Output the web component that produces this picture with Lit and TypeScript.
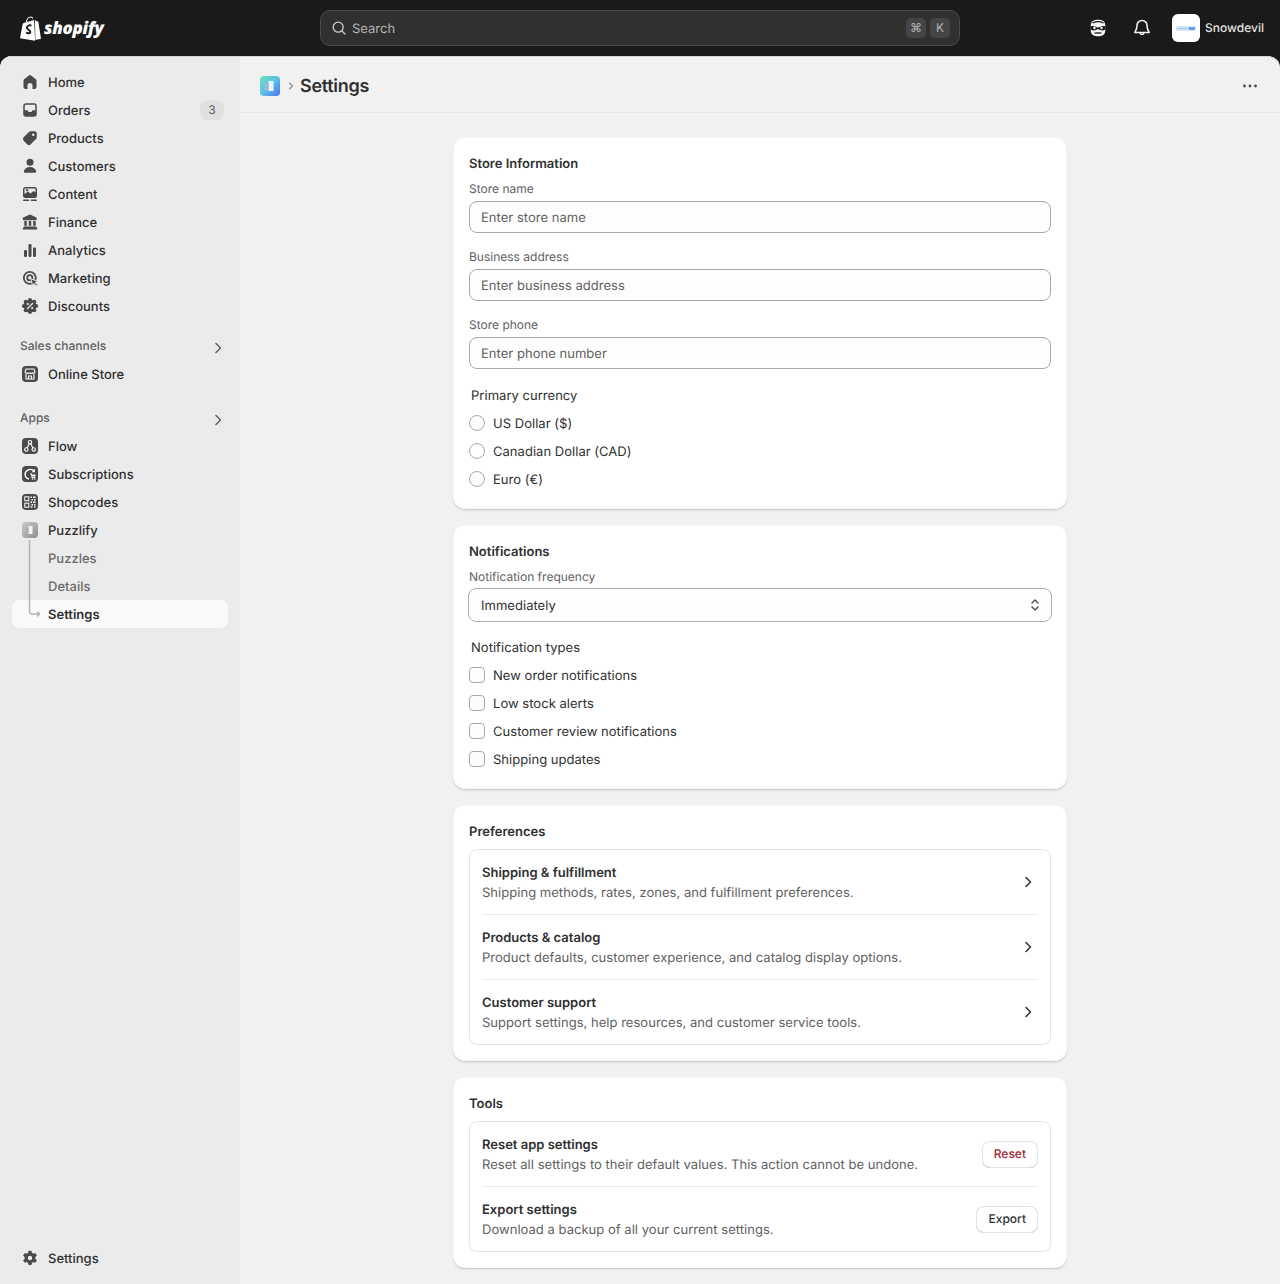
import { LitElement, html, css, svg } from "lit";
import { customElement } from "lit/decorators.js";

const ic = (d: unknown) => html`<svg class="ic" viewBox="0 0 20 20" fill="#4a4a4a" fill-rule="evenodd">${d}</svg>`;
const scallops = [0, 45, 90, 135, 180, 225, 270, 315].map(a => {
  const r = (a * Math.PI) / 180;
  return svg`<circle cx=${10 + 6.1 * Math.cos(r)} cy=${10 + 6.1 * Math.sin(r)} r="2"/>`;
});
const paths: Record<string, unknown> = {
  home: svg`<path d="M8.900 3.400a1.750 1.750 0 0 1 2.200 0l4.750 3.800c.42.33.65.83.65 1.360V15a2 2 0 0 1-2 2H12.500v-3.500a2.500 2.500 0 0 0-5 0V17H5.500a2 2 0 0 1-2-2V8.560c0-.53.23-1.030.65-1.360z"/>`,
  orders: svg`<path d="M6 3.250h8A2.750 2.750 0 0 1 16.750 6v8A2.750 2.750 0 0 1 14 16.750H6A2.750 2.750 0 0 1 3.250 14V6A2.750 2.750 0 0 1 6 3.250zM4.750 6c0-.7.55-1.250 1.250-1.250h8c.7 0 1.250.55 1.250 1.250v4.250H13a1 1 0 0 0-.9.6l-.35.7a1 1 0 0 1-.9.55H9.150a1 1 0 0 1-.9-.55l-.35-.7a1 1 0 0 0-.9-.6H4.750z"/>`,
  products: svg`<path d="M10.700 3.250h4a2 2 0 0 1 2.050 2v4a2.500 2.500 0 0 1-.73 1.770l-5.300 5.300a2.500 2.500 0 0 1-3.530 0l-3.500-3.500a2.500 2.500 0 0 1 0-3.540l5.250-5.300a2.500 2.500 0 0 1 1.760-.73zM13.250 8a1.250 1.250 0 1 0 0-2.500 1.250 1.250 0 0 0 0 2.500z"/>`,
  customers: svg`<circle cx="10" cy="6.250" r="3.500"/><path d="M10 11c3.200 0 5.500 1.700 6.200 4.200.2.8-.5 1.550-1.300 1.550H5.100c-.8 0-1.500-.75-1.300-1.550C4.500 12.700 6.800 11 10 11z"/>`,
  content: svg`<path d="M5.500 3h9A2.500 2.500 0 0 1 17 5.500v6a2.500 2.500 0 0 1-2.500 2.500h-9A2.500 2.500 0 0 1 3 11.500v-6A2.500 2.500 0 0 1 5.500 3zM4.500 5.500c0-.55.45-1 1-1h9c.55 0 1 .45 1 1v2.800l-2-1.300-3 2.500-2.500-2-3.500 2.500zM7.200 7.300a1.200 1.200 0 1 0 0-2.400 1.200 1.200 0 0 0 0 2.400z"/><rect x="3" y="15.500" width="6.300" height="1.500" rx=".75"/><rect x="10.700" y="15.500" width="6.300" height="1.500" rx=".75"/>`,
  finance: svg`<path d="M9.300 2.700a1.500 1.500 0 0 1 1.400 0l5.500 2.800c.4.2.55.5.55.9V7.200c0 .55-.45 1-1 1H3.750c-.55 0-1-.45-1-1v-.8c0-.4.15-.7.55-.9z"/><rect x="4.300" y="9" width="2.500" height="4.800"/><rect x="8.750" y="9" width="2.500" height="4.800"/><rect x="13.200" y="9" width="2.500" height="4.800"/><rect x="3.500" y="14.400" width="13" height="1.500" rx=".5"/><rect x="2.750" y="15.800" width="14.500" height="1.700" rx=".5"/>`,
  analytics: svg`<rect x="4" y="10" width="3" height="7" rx="1.200"/><rect x="8.500" y="4" width="3" height="13" rx="1.200"/><rect x="13" y="7.500" width="3" height="9.500" rx="1.200"/>`,
  marketing: svg`<g fill="none" stroke="#4a4a4a" stroke-width="1.800"><circle cx="9.800" cy="9.800" r="6"/><circle cx="9.800" cy="9.800" r="2.600"/></g><path d="M11 11l7 2.300-2.800 1.200 2.300 2.300-1.100 1.100-2.300-2.300-1.200 2.800z" stroke="#ebebeb" stroke-width=".9" stroke-linejoin="round"/>`,
  discounts: svg`${scallops}<circle cx="10" cy="10" r="6.300"/><g stroke="#ebebeb" fill="none" stroke-linecap="round"><path d="M12.500 7.500l-5 5" stroke-width="1.300"/></g><circle cx="7.800" cy="8" r="1.100" fill="#ebebeb"/><circle cx="12.200" cy="12" r="1.100" fill="#ebebeb"/>`,
  settings: svg`<path stroke="#4a4a4a" stroke-width=".9" stroke-linejoin="round" d="M8.800 3.200h2.400l.5 2 1.500.9 2-.6 1.200 2.100-1.500 1.400v1.800l1.500 1.400-1.200 2.100-2-.6-1.500.9-.5 2H8.800l-.5-2-1.500-.9-2 .6-1.200-2.100 1.500-1.400V9L3.600 7.600l1.200-2.100 2 .6 1.500-.9z"/><circle cx="10" cy="10" r="2.200" fill="#ebebeb"/>`,
};

const appIcon = (inner: unknown) => html`<svg class="ic app" viewBox="0 0 16 16"><rect width="16" height="16" rx="4" fill="#4a4a4a"/>${inner}</svg>`;
const online = appIcon(svg`<g fill="none" stroke="#fff" stroke-width="1.100"><path d="M4 3h8l1 2.800a1.500 1.500 0 0 1-2.500 1 1.700 1.700 0 0 1-2.500 0 1.700 1.700 0 0 1-2.500 0 1.500 1.500 0 0 1-2.500-1z"/><path d="M4 7.500V13h8V7.500"/><path d="M6.500 13v-3h3v3"/></g>`);
const flow = appIcon(svg`<g fill="none" stroke="#fff" stroke-width="1.100"><circle cx="8" cy="4.200" r="1.700"/><circle cx="4.300" cy="11.500" r="1.700"/><circle cx="11.700" cy="11.500" r="1.700"/><path d="M7.300 5.800 5 10M8.700 5.800 11 10"/></g>`);
const subs = appIcon(svg`<path d="M12.500 5.200A5.500 5.500 0 0 0 3 8a5.200 5.200 0 0 0 4 5" fill="none" stroke="#fff" stroke-width="1.400"/><path d="M13 2.800v3.400H9.600z" fill="#fff"/><path d="M8 8h1.500l.6 3.500h3.200" fill="none" stroke="#fff" stroke-width="1.100"/><rect x="10" y="8.500" width="3.500" height="2" fill="#fff"/><circle cx="10.500" cy="13" r=".8" fill="#fff"/><circle cx="12.800" cy="13" r=".8" fill="#fff"/>`);
const qr = appIcon(svg`<g fill="none" stroke="#fff" stroke-width="1"><rect x="2.800" y="2.800" width="4" height="4"/><rect x="2.800" y="9.200" width="4" height="4"/></g><g fill="#fff"><rect x="8.500" y="2.500" width="1.500" height="1.500"/><rect x="11" y="2.500" width="2.500" height="1.500"/><rect x="9.500" y="5" width="1.500" height="1.500"/><rect x="12" y="5" width="1.500" height="1.500"/><rect x="8.500" y="7.500" width="1.500" height="1.500"/><rect x="11" y="7.500" width="2.500" height="1.500"/><rect x="9.500" y="10" width="1.500" height="1.500"/><rect x="12" y="10" width="1.500" height="1.500"/><rect x="8.500" y="12.200" width="2" height="1.300"/><rect x="12" y="12.200" width="1.500" height="1.300"/></g>`);
const puzzleGray = html`<svg class="ic app" viewBox="0 0 16 16"><defs><linearGradient id="pg" x1="0" y1="0" x2="1" y2="1"><stop offset="0" stop-color="#c9c9c9"/><stop offset="1" stop-color="#8f8f8f"/></linearGradient></defs><rect width="16" height="16" rx="4" fill="url(#pg)"/><rect x="6.500" y="4" width="4" height="8" fill="#f1f1f1"/><rect x="4" y="6" width="2.500" height="2" fill="#aaa"/><rect x="4" y="9" width="2.500" height="2" fill="#aaa"/></svg>`;

const chevron = html`<svg class="chev" viewBox="0 0 20 20" fill="none" stroke="#303030" stroke-width="1.500" stroke-linecap="round" stroke-linejoin="round"><path d="M8 5.500 12.500 10 8 14.500"/></svg>`;
const secChev = html`<svg class="secchev" viewBox="0 0 20 20" fill="none" stroke="#616161" stroke-width="1.500" stroke-linecap="round" stroke-linejoin="round"><path d="M8 5.500 12.500 10 8 14.500"/></svg>`;

const nav = [
  ["Home", "home"], ["Orders", "orders"], ["Products", "products"], ["Customers", "customers"], ["Content", "content"],
  ["Finance", "finance"], ["Analytics", "analytics"], ["Marketing", "marketing"], ["Discounts", "discounts"],
];

@customElement("app-root")
export class AppRoot extends LitElement {
  static styles = css`
    :host { display: block; height: 100vh; overflow: hidden; background: #1a1a1a; font-family: Inter, "Liberation Sans", sans-serif; font-size: 13px; line-height: 20px; color: #303030; text-rendering: geometricPrecision; }
    * { box-sizing: border-box; }
    .tx { padding-top: 1px; }
    .top { height: 56px; display: grid; grid-template-columns: 320px 640px 1fr; align-items: center; }
    .logo { display: flex; align-items: center; padding-left: 20px; gap: 3px; }
    .logo svg { width: 21px; height: 25px; display: block; }
    .word { font-family: "Open Sans", sans-serif; font-style: italic; font-weight: 800; font-size: 17px; color: #fff; letter-spacing: -.3px; line-height: 24px; }
    .search { height: 36px; border-radius: 10px; background: #303030; border: 1px solid #4a4a4a; display: flex; align-items: center; padding: 0 9px 0 10px; color: #b5b5b5; }
    .search svg { width: 16px; height: 16px; margin-right: 5px; flex: none; }
    .search span.t { flex: 1; font-size: 13px; padding-top: 1px; }
    .kbd { width: 20px; height: 20px; border-radius: 5px; background: #454545; display: flex; align-items: center; justify-content: center; font-size: 12px; color: #b5b5b5; margin-left: 4px; }
    .right { display: flex; align-items: center; justify-content: flex-end; padding-right: 16px; }
    .right .mask { width: 20px; height: 20px; margin-right: 24px; }
    .right .bell { width: 20px; height: 20px; margin-right: 20px; }
    .avatar { width: 28px; height: 28px; border-radius: 6px; background: #fff; display: flex; align-items: center; justify-content: center; margin-right: 5px; }
    .avatar svg { width: 20px; height: 5px; }
    .shop { font-size: 12px; font-weight: 500; color: #e3e3e3; }

    .body { height: calc(100vh - 56px); display: grid; grid-template-columns: 240px 1fr; border-radius: 12px 12px 0 0; overflow: hidden; background: #f1f1f1; box-shadow: inset 0 1px 0 #d4d4d4; }
    .side { background: #ebebeb; padding: 12px; display: flex; flex-direction: column; justify-content: space-between; box-shadow: inset 0 1px 0 #d4d4d4; }
    .item { height: 28px; display: flex; align-items: center; gap: 8px; padding: 0 4px 0 8px; border-radius: 8px; font-weight: 500; color: #303030; }
    .ic { width: 20px; height: 20px; flex: none; display: block; }
    .ic.app { width: 16px; height: 16px; margin: 0 2px; }
    .item .label { flex: 1; padding-top: 1px; }
    .count { min-width: 24px; height: 20px; border-radius: 8px; background: #e0e0e0; color: #616161; font-size: 12px; display: flex; align-items: center; justify-content: center; font-weight: 400; }
    .section { height: 28px; display: flex; align-items: center; justify-content: space-between; padding: 0 0 0 8px; font-size: 12px; font-weight: 550; color: #616161; margin-top: 12px; }
    .section.apps { margin-top: 16px; }
    .secchev { width: 20px; height: 20px; margin-top: 3px; flex: none; }
    .subs { position: relative; }
    .tree { position: absolute; left: 16px; top: -4px; width: 14px; height: 80px; }
    .sub { height: 28px; display: flex; align-items: center; padding: 1px 0 0 36px; border-radius: 8px; color: #6b6b6b; font-weight: 500; }
    .sub.active { background: #fafafa; color: #303030; font-weight: 600; }

    .main { min-width: 0; display: flex; flex-direction: column; }
    .head { height: 57px; flex: none; border-bottom: 1px solid #e8e8e8; display: flex; align-items: center; padding: 4px 20px 0; }
    .appmark { width: 20px; height: 20px; display: block; }
    .crumb { width: 12px; height: 12px; margin: 0 3px 0 5px; }
    .title { font-size: 18px; font-weight: 600; line-height: 24px; color: #303030; flex: 1; letter-spacing: -.3px; padding-top: 1px; }
    .dots { width: 20px; height: 20px; }
    .content { display: flex; flex-direction: column; gap: 16px; width: 614px; margin: 24px 0 0 213px; }
    .card { background: #fff; border-radius: 12px; padding: 16px; box-shadow: 0 1px 0 #d0d0d0, 0 2px 3px -1px rgba(26,26,26,.12), inset 0 0 0 1px rgba(0,0,0,.03); }
    .card h2 { margin: 0 0 7px; padding-top: 1px; font-size: 13px; line-height: 20px; font-weight: 600; color: #303030; }
    .lab { display: block; font-size: 12px; line-height: 16px; margin-bottom: 4px; color: #616161; }
    .inp { height: 32px; border: 1px solid #a8a8a8; border-radius: 8px; background: #fdfdfd; display: flex; align-items: center; padding: 0 11px; color: #616161; margin-bottom: 16px; letter-spacing: .03px; }
    .inp.last { margin-bottom: 12px; }
    .inp.sel { height: 34px; margin: -1px -1px 11px; padding: 0 6px 0 12px; color: #303030; border-color: #b0b0b0; justify-content: space-between; }
    .inp.sel svg { width: 20px; height: 20px; }
    .grp { height: 28px; display: flex; align-items: center; padding: 1px 0 0 2px; color: #303030; letter-spacing: .03px; }
    .opt { height: 28px; display: flex; align-items: center; gap: 8px; color: #303030; letter-spacing: .03px; }
    .radio { width: 16px; height: 16px; border-radius: 50%; border: 1px solid #a8a8a8; background: #fdfdfd; flex: none; }
    .check { width: 16px; height: 16px; border-radius: 4px; border: 1px solid #a8a8a8; background: #fdfdfd; flex: none; }
    .box { border: 1px solid #e3e3e3; border-radius: 8px; padding: 0 12px; }
    .row { display: flex; align-items: center; justify-content: space-between; padding: 12px 0; border-bottom: 1px solid #ebebeb; }
    .row:last-child { border-bottom: 0; }
    .row b { display: block; font-weight: 600; color: #303030; padding-top: 1px; margin-bottom: -1px; }
    .row span { display: block; color: #616161; letter-spacing: .03px; padding-top: 1px; margin-bottom: -1px; }
    .chev { width: 20px; height: 20px; flex: none; }
    .btn { height: 27px; padding: 0 12px; display: flex; align-items: center; border-radius: 8px; background: #fff; font-size: 12px; font-weight: 550; color: #303030; box-shadow: inset 0 0 0 1px #e3e3e3, inset 0 -1px 0 #b5b5b5; }
    .btn.danger { color: #9c1f36; }
  `;

  render() {
    return html`
      <div class="top">
        <div class="logo">
          <svg viewBox="0 0 21 25">
            <path d="M6.300 6.500C6.600 3.500 8.500 1 10.700 1c1 0 1.700.6 2.100 1.500" fill="none" stroke="#fff" stroke-width="1.100"/>
            <path d="M0 22.200 2.800 7.400 5.300 6.600l6-1.800 2.800-.7 1 20.600z" fill="#fff"/>
            <path d="M14.900 3.800l1.600 1.500 1.800.2L21 22.700l-5.600 1.300z" fill="#fff"/>
            <path d="M11.500 9.700c-2-.9-4.600-.1-4.600 1.900 0 2.200 3.500 2.500 3.500 4.300 0 1.700-2.500 1.700-4.200.5" fill="none" stroke="#1a1a1a" stroke-width="1.900"/>
          </svg>
          <span class="word">shopify</span>
        </div>
        <div class="search">
          <svg viewBox="0 0 16 16" fill="none" stroke="#d0d0d0" stroke-width="1.300" stroke-linecap="round"><circle cx="7.200" cy="7.200" r="5"/><path d="M11 11l3 3"/></svg>
          <span class="t">Search</span>
          <span class="kbd">⌘</span><span class="kbd">K</span>
        </div>
        <div class="right">
          <svg class="mask" viewBox="0 0 18 18"><path d="M9 1.500c3.800 0 6.500 1.500 6.500 5v5c0 3.500-2.700 5-6.500 5s-6.500-1.500-6.500-5v-5c0-3.500 2.700-5 6.500-5z" fill="#f4f4f4"/><path d="M2.500 7.500c3-1 4.500 1 6.500 1s3.500-2 6.500-1v2.800c-2 1.600-4.500 1-6.500-.3-2 1.300-4.500 1.900-6.500.3z" fill="#1a1a1a"/><circle cx="5.800" cy="9" r="1.100" fill="#f4f4f4"/><circle cx="12.200" cy="9" r="1.100" fill="#f4f4f4"/><path d="M4 4.500c3-1.500 7-1.500 10 0" stroke="#1a1a1a" stroke-width="1.100" fill="none"/><path d="M6 13.500h6" stroke="#1a1a1a" stroke-width="1.200"/></svg>
          <svg class="bell" viewBox="0 0 18 18" fill="none" stroke="#f0f0f0" stroke-width="1.400" stroke-linejoin="round"><path d="M9 2.200A4.500 4.500 0 0 0 4.500 6.700c0 3.500-1.500 5-2 6.300h13c-.5-1.300-2-2.800-2-6.300A4.500 4.500 0 0 0 9 2.200z"/><path d="M7.200 13.500a1.900 1.900 0 0 0 3.600 0"/></svg>
          <div class="avatar"><svg viewBox="0 0 20 5"><rect width="20" height="5" fill="#d6e7fb"/><rect x="1" y="1.800" width="10" height="1.400" fill="#a9c9ee"/><rect x="12.500" y="1.300" width="6.500" height="2.400" fill="#5b8fd6"/></svg></div>
          <span class="shop">Snowdevil</span>
        </div>
      </div>
      <div class="body">
        <aside class="side">
          <div>
            ${nav.map(([n, i]) => html`<div class="item">${ic(paths[i])}<span class="label">${n}</span>${n === "Orders" ? html`<span class="count">3</span>` : ""}</div>`)}
            <div class="section"><span>Sales channels</span>${secChev}</div>
            <div class="item">${online}<span class="label">Online Store</span></div>
            <div class="section apps"><span>Apps</span>${secChev}</div>
            <div class="item">${flow}<span class="label">Flow</span></div>
            <div class="item">${subs}<span class="label">Subscriptions</span></div>
            <div class="item">${qr}<span class="label">Shopcodes</span></div>
            <div class="item">${puzzleGray}<span class="label">Puzzlify</span></div>
            <div class="subs">
              <svg class="tree" viewBox="0 0 14 80" fill="none" stroke="#b5b5b5" stroke-width="1.500" stroke-linecap="round" stroke-linejoin="round"><path d="M1.500 .5V71a3 3 0 0 0 3 3h7M9.500 72l2.200 2-2.200 2"/></svg>
              <div class="sub">Puzzles</div>
              <div class="sub">Details</div>
              <div class="sub active">Settings</div>
            </div>
          </div>
          <div class="item">${ic(paths.settings)}<span class="label">Settings</span></div>
        </aside>
        <main class="main">
          <div class="head">
            <svg class="appmark" viewBox="0 0 20 20"><defs><linearGradient id="pz" x1="0" y1="0" x2="1" y2="1"><stop offset="0" stop-color="#6fe0b4"/><stop offset=".5" stop-color="#5cc3e8"/><stop offset="1" stop-color="#4a6cf0"/></linearGradient></defs><rect width="20" height="20" rx="4" fill="url(#pz)"/><rect x="8.500" y="5" width="5" height="10" fill="#eef4ff"/><rect x="5" y="8" width="3.500" height="2.500" fill="#a9b8c8"/><rect x="5" y="11.500" width="3.500" height="2.500" fill="#a9b8c8"/></svg>
            <svg class="crumb" viewBox="0 0 12 12" fill="none" stroke="#8a8a8a" stroke-width="1.100" stroke-linecap="round" stroke-linejoin="round"><path d="M4.500 3 7.500 6 4.500 9"/></svg>
            <span class="title">Settings</span>
            <svg class="dots" viewBox="0 0 20 20" fill="#4a4a4a"><circle cx="4.500" cy="10" r="1.400"/><circle cx="10" cy="10" r="1.400"/><circle cx="15.500" cy="10" r="1.400"/></svg>
          </div>
          <div class="content">
            <section class="card">
              <h2>Store Information</h2>
              <label class="lab">Store name</label><div class="inp"><span class="tx">Enter store name</span></div>
              <label class="lab">Business address</label><div class="inp"><span class="tx">Enter business address</span></div>
              <label class="lab">Store phone</label><div class="inp last"><span class="tx">Enter phone number</span></div>
              <div class="grp">Primary currency</div>
              ${["US Dollar ($)", "Canadian Dollar (CAD)", "Euro (€)"].map(t => html`<div class="opt"><span class="radio"></span><span class="tx">${t}</span></div>`)}
            </section>
            <section class="card">
              <h2>Notifications</h2>
              <label class="lab">Notification frequency</label>
              <div class="inp sel"><span class="tx">Immediately</span><svg viewBox="0 0 20 20" fill="none" stroke="#4a4a4a" stroke-width="1.400" stroke-linecap="round" stroke-linejoin="round"><path d="M7 8 10 5l3 3M7 12l3 3 3-3"/></svg></div>
              <div class="grp">Notification types</div>
              ${["New order notifications", "Low stock alerts", "Customer review notifications", "Shipping updates"].map(t => html`<div class="opt"><span class="check"></span><span class="tx">${t}</span></div>`)}
            </section>
            <section class="card">
              <h2>Preferences</h2>
              <div class="box">
                ${[["Shipping & fulfillment", "Shipping methods, rates, zones, and fulfillment preferences."],
                   ["Products & catalog", "Product defaults, customer experience, and catalog display options."],
                   ["Customer support", "Support settings, help resources, and customer service tools."]].map(([a, b]) => html`<div class="row"><div><b>${a}</b><span>${b}</span></div>${chevron}</div>`)}
              </div>
            </section>
            <section class="card">
              <h2>Tools</h2>
              <div class="box">
                <div class="row"><div><b>Reset app settings</b><span>Reset all settings to their default values. This action cannot be undone.</span></div><div class="btn danger">Reset</div></div>
                <div class="row"><div><b>Export settings</b><span>Download a backup of all your current settings.</span></div><div class="btn">Export</div></div>
              </div>
            </section>
          </div>
        </main>
      </div>
    `;
  }
}
